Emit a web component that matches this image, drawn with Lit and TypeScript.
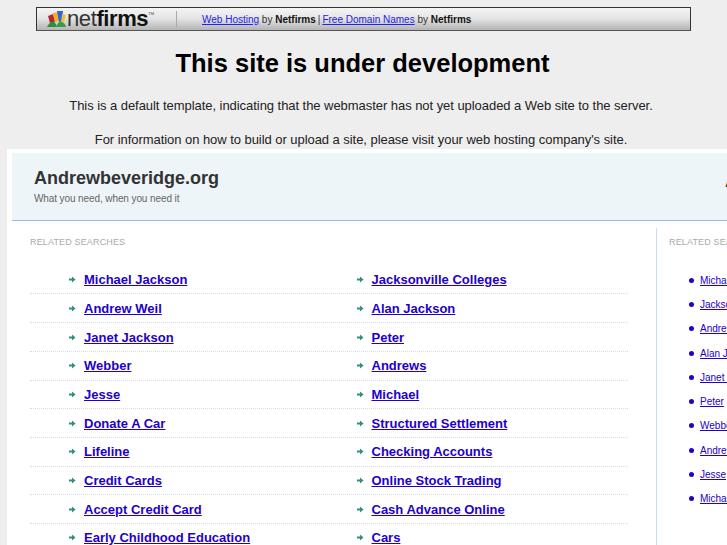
import { LitElement, html, css, svg } from "lit";
import { customElement } from "lit/decorators.js";

const left = [
  ["Michael Jackson", "Jacksonville Colleges"],
  ["Andrew Weil", "Alan Jackson"],
  ["Janet Jackson", "Peter"],
  ["Webber", "Andrews"],
  ["Jesse", "Michael"],
  ["Donate A Car", "Structured Settlement"],
  ["Lifeline", "Checking Accounts"],
  ["Credit Cards", "Online Stock Trading"],
  ["Accept Credit Card", "Cash Advance Online"],
  ["Early Childhood Education", "Cars"],
];
const right = ["Michael Jackson", "Jacksonville Colleges", "Andrew Weil", "Alan Jackson", "Janet Jackson", "Peter", "Webber", "Andrews", "Jesse", "Michael"];

const arrow = svg`<svg class="arrow" width="7" height="7" viewBox="0 0 7 7"><path d="M0 2.500h3V0.500L6.500 3.500 3 6.500V4.500H0z" fill="#2f8f80"/></svg>`;

const logo = html`<svg class="logo" width="20" height="18" viewBox="0 0 20 18">
  <path d="M1 6l5-2 2 8-5 1z" fill="#b8262c"/>
  <path d="M6 3l5-1 1 9-4 1z" fill="#f2b21c"/>
  <path d="M10 1l6 0 -1 10-3 1z" fill="#2a62e8"/>
  <path d="M15 4l4 1-2 7-3 0z" fill="#f0c22e"/>
  <path d="M0 17q3-6 7-5 2 1 3 5z" fill="#2f8f3a"/>
  <path d="M9 17q3-7 6-5 3 1 4 5z" fill="#3a9c44"/>
</svg>`;

@customElement("app-root")
export class AppRoot extends LitElement {
  static styles = css`
    :host { display: block; width: 727px; height: 545px; overflow: hidden; background: #eeeeee; font-family: "Liberation Sans", Arial, sans-serif; }
    .top { height: 149px; display: flex; flex-direction: column; align-items: center; }
    .banner { box-sizing: border-box; width: 655px; height: 24px; margin-top: 7px; border: 1px solid #333; border-bottom-color: #555; background: linear-gradient(#f4f4f4 0%, #e6e6e6 45%, #b4b4b4 100%); display: flex; align-items: center; font-size: 10px; color: #333; white-space: nowrap; }
    .brand { display: flex; align-items: center; width: 139px; flex: none; padding-left: 10px; box-sizing: border-box; }
    .logo { flex: none; }
    .word { font-size: 22px; letter-spacing: -0.400px; color: #333; line-height: 22px; }
    .word b { font-weight: 700; }
    .tm { font-size: 4px; align-self: flex-start; margin-top: 3px; color: #444; }
    .sep { width: 1px; height: 16px; background: #aaa; flex: none; margin-right: 25px; }
    .banner a { color: #2222ee; }
    .banner b { color: #111; }
    .mid { margin: 0 2px; }
    h1 { margin: 17px 2px 0 0; font-size: 25.500px; line-height: 30px; font-weight: 700; color: #000; }
    p { margin: 0 5px 0 0; font-size: 13px; line-height: 16px; color: #222; letter-spacing: -0.050px; }
    p.a { margin-top: 20px; }
    p.b { margin-top: 18px; }
    .panel { margin-left: 7px; width: 860px; height: 396px; background: #fff; padding: 4px 0 0 5px; box-sizing: border-box; }
    .head { display: flex; height: 68px; box-sizing: border-box; background: #eef5f8; border-bottom: 1px solid #9db8e8; padding: 15px 0 0 22px; }
    .head-l { width: 691px; flex: none; }
    .name { font-size: 18px; line-height: 21px; font-weight: 700; color: #333; }
    .tag { font-size: 10px; line-height: 12px; color: #666; margin-top: 4px; letter-spacing: -0.100px; }
    .head-r { font-size: 18px; line-height: 21px; font-weight: 700; color: #333; margin-top: 3px; }
    .cols { display: flex; height: 324px; }
    .main { width: 644px; flex: none; box-sizing: border-box; padding: 15px 0 0 18px; }
    .label { font-size: 9px; line-height: 12px; letter-spacing: 0.150px; color: #aaa; white-space: nowrap; }
    .grid { margin-top: 17.800px; width: 598px; }
    .row { display: grid; grid-template-columns: 287.500px 1fr; height: 28.700px; box-sizing: border-box; border-bottom: 1px dotted #d2dce6; }
    .cell { display: flex; align-items: center; gap: 8px; padding-left: 39px; font-size: 13px; font-weight: 700; white-space: nowrap; }
    .cell a, .side a { color: #2200cc; }
    .arrow { flex: none; }
    .side { margin-top: 7px; border-left: 1px solid #c9dcf5; padding: 8px 0 0 12px; flex: 1; }
    ul { list-style: none; margin: 0; padding: 20px 0 0 20px; }
    li { display: flex; align-items: center; gap: 6px; height: 24.300px; font-size: 10px; white-space: nowrap; }
    .dot { width: 5px; height: 5px; border-radius: 50%; background: #2200cc; flex: none; }
  `;

  render() {
    return html`
      <div class="top">
        <div class="banner">
          <div class="brand">${logo}<span class="word">net<b>firms</b></span><span class="tm">TM</span></div>
          <span class="sep"></span>
          <a href="#">Web Hosting</a>&nbsp;by&nbsp;<b>Netfirms</b><span class="mid">|</span><a href="#">Free Domain Names</a>&nbsp;by&nbsp;<b>Netfirms</b>
        </div>
        <h1>This site is under development</h1>
        <p class="a">This is a default template, indicating that the webmaster has not yet uploaded a Web site to the server.</p>
        <p class="b">For information on how to build or upload a site, please visit your web hosting company's site.</p>
      </div>
      <div class="panel">
        <div class="head">
          <div class="head-l">
            <div class="name">Andrewbeveridge.org</div>
            <div class="tag">What you need, when you need it</div>
          </div>
          <div class="head-r">Andrew</div>
        </div>
        <div class="cols">
          <div class="main">
            <div class="label">RELATED SEARCHES</div>
            <div class="grid">
              ${left.map(r => html`<div class="row">${r.map(t => html`<div class="cell">${arrow}<a href="#">${t}</a></div>`)}</div>`)}
            </div>
          </div>
          <div class="side">
            <div class="label">RELATED SEARCHES</div>
            <ul>${right.map(t => html`<li><span class="dot"></span><a href="#">${t}</a></li>`)}</ul>
          </div>
        </div>
      </div>
    `;
  }
}
